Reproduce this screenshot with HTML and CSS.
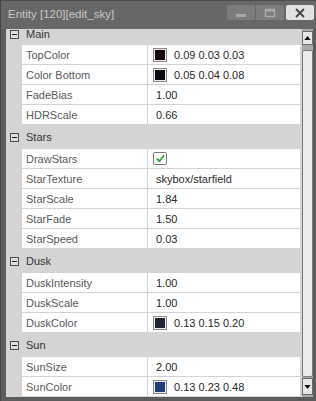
FILE: index.html
```html
<!DOCTYPE html>
<html>
<head>
  <title>Entity [120][edit_sky]</title>
  <link rel="stylesheet" href="styles.css">
</head>
<body>
  <div class="window">
    <div class="titlebar">
      <span class="title">Entity [120][edit_sky]</span>
      <div class="buttons">
        <div class="win-btn">
          <svg class="glyph" viewBox="0 0 12 10"><rect x="1" y="6" width="10" height="3" fill="#a9a9a9"/></svg>
        </div>
        <div class="win-btn">
          <svg class="glyph" viewBox="0 0 12 10"><rect x="1.5" y="1.5" width="9" height="7" fill="none" stroke="#a9a9a9" stroke-width="1.5"/><rect x="1" y="1" width="10" height="2.5" fill="#a9a9a9"/></svg>
        </div>
        <div class="win-btn close">
          <svg class="glyph" viewBox="0 0 12 10"><path d="M2 1l8 8M10 1l-8 8" stroke="#4a4a4a" stroke-width="2"/></svg>
        </div>
      </div>
    </div>

    <div class="client">
      <div class="grid">
        <div class="group first">
          <span class="collapse"></span>
          <span class="group-name">Main</span>
        </div>
        <div class="row">
          <div class="name">TopColor</div>
          <div class="value"><span class="swatch" style="background:#170808"></span>0.09 0.03 0.03</div>
        </div>
        <div class="row">
          <div class="name">Color Bottom</div>
          <div class="value"><span class="swatch" style="background:#0d0a14"></span>0.05 0.04 0.08</div>
        </div>
        <div class="row">
          <div class="name">FadeBias</div>
          <div class="value"><span class="text">1.00</span></div>
        </div>
        <div class="row">
          <div class="name">HDRScale</div>
          <div class="value"><span class="text">0.66</span></div>
        </div>

        <div class="group">
          <span class="collapse"></span>
          <span class="group-name">Stars</span>
        </div>
        <div class="row">
          <div class="name">DrawStars</div>
          <div class="value">
            <span class="checkbox">
              <svg viewBox="0 0 12 12"><path d="M2.5 6.5l2.5 2.5 4.5-6" fill="none" stroke="#3daa4a" stroke-width="2.2" stroke-linecap="round" stroke-linejoin="round"/></svg>
            </span>
          </div>
        </div>
        <div class="row">
          <div class="name">StarTexture</div>
          <div class="value"><span class="text">skybox/starfield</span></div>
        </div>
        <div class="row">
          <div class="name">StarScale</div>
          <div class="value"><span class="text">1.84</span></div>
        </div>
        <div class="row">
          <div class="name">StarFade</div>
          <div class="value"><span class="text">1.50</span></div>
        </div>
        <div class="row">
          <div class="name">StarSpeed</div>
          <div class="value"><span class="text">0.03</span></div>
        </div>

        <div class="group">
          <span class="collapse"></span>
          <span class="group-name">Dusk</span>
        </div>
        <div class="row">
          <div class="name">DuskIntensity</div>
          <div class="value"><span class="text">1.00</span></div>
        </div>
        <div class="row">
          <div class="name">DuskScale</div>
          <div class="value"><span class="text">1.00</span></div>
        </div>
        <div class="row">
          <div class="name">DuskColor</div>
          <div class="value"><span class="swatch" style="background:#212633"></span>0.13 0.15 0.20</div>
        </div>

        <div class="group">
          <span class="collapse"></span>
          <span class="group-name">Sun</span>
        </div>
        <div class="row">
          <div class="name">SunSize</div>
          <div class="value"><span class="text">2.00</span></div>
        </div>
        <div class="row">
          <div class="name">SunColor</div>
          <div class="value"><span class="swatch" style="background:#213b7a"></span>0.13 0.23 0.48</div>
        </div>
      </div>

      <div class="scrollbar">
        <div class="arrow">
          <svg viewBox="0 0 8 5"><path d="M0 5L4 0L8 5Z" fill="#111"/></svg>
        </div>
        <div class="thumb"></div>
        <div class="arrow down">
          <svg viewBox="0 0 8 5"><path d="M0 0L4 5L8 0Z" fill="#111"/></svg>
        </div>
      </div>
    </div>
  </div>
</body>
</html>
```

FILE: styles.css
```css
body {
  margin: 0;
  background: #3b4246;
  font-family: "Liberation Sans", Arial, sans-serif;
  font-size: 11px;
}

.window {
  width: 316px;
  height: 401px;
  box-sizing: border-box;
  display: flex;
  flex-direction: column;
  background: #5c5c5c;
  border-left: 1px solid #40474c;
  border-top: 1px solid #4c4c4c;
}

.titlebar {
  height: 28px;
  display: flex;
  align-items: center;
  padding: 0 2px 0 7px;
  background: #676767;
}

.title {
  flex: 1;
  font-size: 11.5px;
  color: #c8c8c8;
  margin-top: -2px;
}

.buttons {
  display: flex;
  gap: 1px;
  align-self: flex-start;
  margin-top: 4px;
}

.win-btn {
  width: 28px;
  height: 15px;
  display: flex;
  align-items: center;
  justify-content: center;
  background: #7c7c7c;
  border-radius: 2px;
}

.win-btn.close {
  background: #e2e2e2;
  margin-left: 1px;
}

.glyph {
  width: 12px;
  height: 10px;
}

.client {
  flex: 1;
  display: flex;
  margin: 0 3px 4px 5px;
  background: #d4d4d4;
  min-height: 0;
}

.grid {
  flex: 1;
  overflow: hidden;
}

.group {
  height: 24px;
  display: flex;
  align-items: center;
  gap: 7px;
  padding-left: 4px;
  color: #333;
}

/* first group is scrolled partly out of view */
.group.first {
  height: 16px;
  align-items: flex-start;
  line-height: 11px;
}

.group.first .collapse {
  margin-top: 1px;
}

.collapse {
  position: relative;
  width: 7px;
  height: 7px;
  border: 1px solid #4a4a4a;
  background: #dedede;
}

.collapse:before {
  content: "";
  position: absolute;
  left: 1px;
  top: 3px;
  width: 5px;
  height: 1px;
  background: #222;
}

.row {
  display: grid;
  grid-template-columns: 125px 1fr;
  column-gap: 1px;
  height: 19px;
  margin: 0 0 1px 16px;
}

.name,
.value {
  display: flex;
  align-items: center;
  background: #ffffff;
}

.name {
  padding-left: 4px;
  color: #5a5a5a;
}

.value {
  padding-left: 5px;
  color: #2a2a2a;
}

.text {
  margin-left: 3px;
}

.swatch {
  width: 12px;
  height: 12px;
  margin-right: 7px;
  border: 1px solid #8a8a8a;
  box-shadow: inset 0 0 0 1px #eeeeee;
}

.checkbox {
  width: 12px;
  height: 11px;
  display: flex;
  align-items: center;
  justify-content: center;
  border: 1px solid #7a7a7a;
  border-radius: 2px;
  background: #fff;
}

.checkbox svg {
  width: 11px;
  height: 11px;
}

.scrollbar {
  width: 11px;
  margin-left: 2px;
  display: flex;
  flex-direction: column;
  padding: 2px 0;
  gap: 5px;
  background: #a8a8a8;
}

.arrow {
  height: 12px;
  display: flex;
  align-items: center;
  justify-content: center;
  background: #e6e6e6;
  border: 1px solid #6a6a6a;
}

.arrow.down {
  height: 15px;
}

.arrow svg {
  width: 7px;
  height: 4px;
}

.thumb {
  flex: 1;
  margin-bottom: -4px;
  background: #ebebeb;
  border: 1px solid #7c7c7c;
  border-radius: 2px;
}
```
